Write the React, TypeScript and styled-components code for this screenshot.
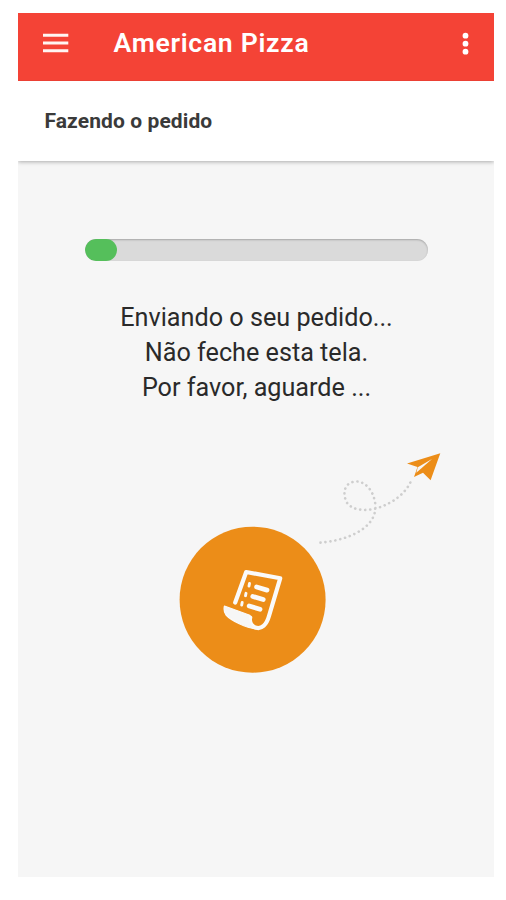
import React from "react";
import styled, { createGlobalStyle } from "styled-components";

const GlobalStyle = createGlobalStyle`
  * { box-sizing: border-box; }
  body { margin: 0; background: #fff; font-family: Roboto, "Liberation Sans", sans-serif; }
`;

const Page = styled.div`
  height: 900px;
  padding: 13px 12px 0 18px;
  overflow: hidden;
`;

const Screen = styled.main`
  display: flex;
  flex-direction: column;
  height: 864px;
  background: #f6f6f6;
`;

const AppBar = styled.header`
  display: flex;
  align-items: center;
  flex: none;
  height: 67.5px;
  padding: 0 22px 7px 24.5px;
  background: #f44336;
  color: #fff;
`;

const IconButton = styled.button<{ $width: number }>`
  display: flex;
  width: ${(p) => p.$width}px;
  padding: 0;
  border: 0;
  background: none;
  color: inherit;
`;

const Brand = styled.h1`
  flex: 1;
  margin: 0 0 0 45px;
  font-size: 26.6px;
  font-weight: 600;
  letter-spacing: 0.7px;
  line-height: 32px;
  white-space: nowrap;
`;

const SubHeader = styled.section`
  display: flex;
  align-items: center;
  flex: none;
  height: 80px;
  padding: 0 26.5px;
  background: #fff;
  box-shadow: 0 1px 4px rgba(0, 0, 0, 0.3);
  clip-path: inset(0 0 -8px 0);
`;

const Heading = styled.h2`
  margin: 0;
  color: #3a3a3a;
  font-size: 21px;
  font-weight: 700;
  letter-spacing: 0.1px;
  line-height: 26px;
`;

const Content = styled.section`
  display: flex;
  flex-direction: column;
  align-items: center;
  padding-top: 78.5px;
`;

const Track = styled.div`
  width: 343px;
  height: 22px;
  border-radius: 11px;
  background: #dadada;
  box-shadow: inset 0 1px 2px rgba(0, 0, 0, 0.24);
  overflow: hidden;
`;

const Fill = styled.div`
  width: 32px;
  height: 100%;
  border-radius: 11px;
  background: #55bf5b;
`;

const Message = styled.p`
  margin: 39px 0 0 1px;
  color: #2a2a2a;
  font-size: 25.2px;
  line-height: 35px;
  text-align: center;
`;

const Drawing = styled.svg`
  display: block;
  margin-top: 35px;
  margin-left: 108px;
`;

export default function App() {
  return (
    <Page>
      <GlobalStyle />
      <Screen>
        <AppBar>
          <IconButton $width={26} aria-label="Menu">
            <svg width="26" height="20" viewBox="0 0 26 20" stroke="#fff5f2" strokeWidth="2.9">
              <path d="M0 2.2H25.3M0 10H25.3M0 17.8H25.3" />
            </svg>
          </IconButton>
          <Brand>American Pizza</Brand>
          <IconButton $width={13} aria-label="Mais opções">
            <svg width="13" height="24" viewBox="0 0 13 24" fill="#fff">
              <circle cx="6.5" cy="4.7" r="2.9" />
              <circle cx="6.5" cy="12.7" r="2.9" />
              <circle cx="6.5" cy="20.7" r="2.9" />
            </svg>
          </IconButton>
        </AppBar>
        <SubHeader>
          <Heading>Fazendo o pedido</Heading>
        </SubHeader>
        <Content>
          <Track role="progressbar" aria-valuenow={9}>
            <Fill />
          </Track>
          <Message>
            Enviando o seu pedido...
            <br />
            Não feche esta tela.
            <br />
            Por favor, aguarde ...
          </Message>
          <Drawing width="280" height="240" viewBox="170 440 280 240" fill="none">
            <circle cx="252.6" cy="599.7" r="73" fill="#ec8d18" />
            <path
              d="M320.5 542.6C343 541 378 530 375.3 504C373.5 490 365 481.5 356.5 481.5C346 481.5 341.5 491 346.5 502C352 511 366 511 376 508.5C394 503 406 493 411.5 480"
              stroke="#cecece"
              strokeWidth="2.6"
              strokeDasharray="0.1 4.9"
              strokeLinecap="round"
            />
            <path d="M440.3 453.2L407 463.5L417.5 467L414 477L423 472.8L430.6 480.2Z" fill="#ec8d18" />
            <path d="M432 459L417.8 467.3L416.3 472.8Z" fill="#f6f6f6" />
            <g stroke="#fafafa" strokeLinecap="round" strokeLinejoin="round">
              <path
                d="M235.2 602.5L246.2 572L280.2 578.3L269 616C266.5 625 261.5 629 256.5 627.8C251.5 627 249 622 250.2 617.5"
                strokeWidth="4.2"
              />
              <path
                d="M224.4 606L249.8 615.3C249 621 252 627 257 629C246 628 231 620.5 226 615C223.7 612 223.8 609 224.4 606Z"
                fill="#f6f6f6"
                strokeWidth="1.2"
              />
              <path d="M256.6 587L267 590.1M252.8 596.5L263.2 599.5M249.2 606L260 609.2" strokeWidth="4.8" />
              <path d="M249.5 583.5L249 586M246 593.3L245.5 595.7M242.2 602.5L241.7 605" strokeWidth="2.9" />
            </g>
          </Drawing>
        </Content>
      </Screen>
    </Page>
  );
}
